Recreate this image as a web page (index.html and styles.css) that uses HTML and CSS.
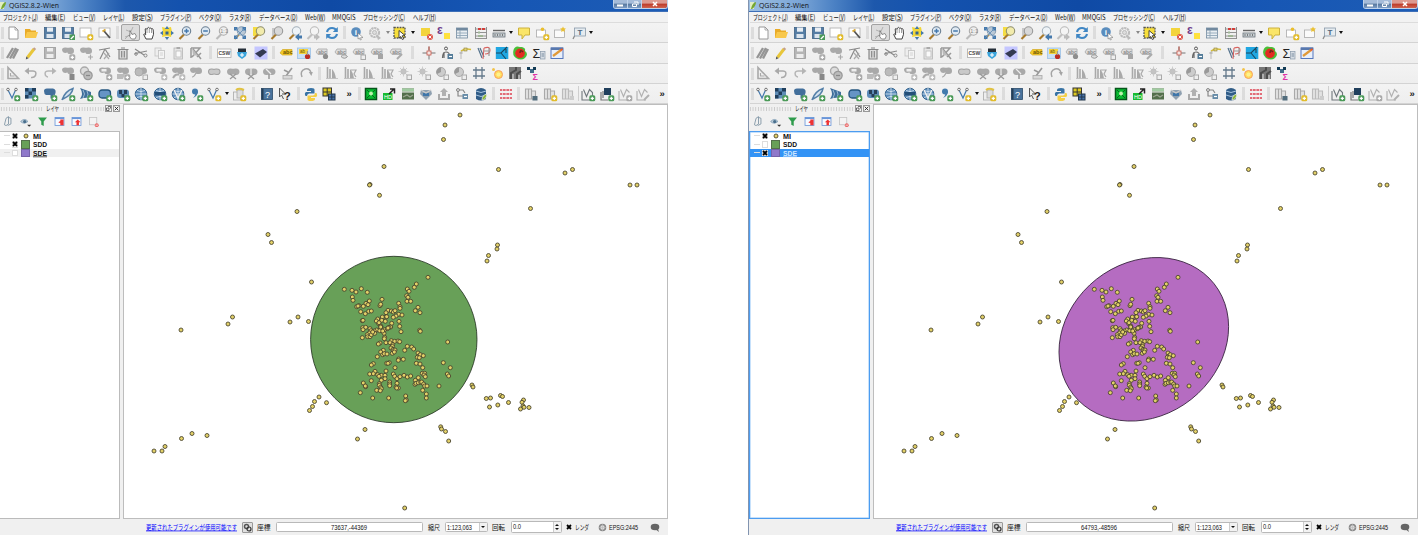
FILE: index.html
```html
<!DOCTYPE html>
<html lang="ja">
<head>
<meta charset="utf-8">
<title>QGIS2.8.2-Wien</title>
<link rel="stylesheet" href="styles.css">
</head>
<body>
<main class="desktop">
  <section class="window" id="left"></section>
  <section class="window window-right" id="right"></section>
</main>
<script src="app.js"></script>
</body>
</html>
```
FILE: styles.css
```css
* { box-sizing: border-box; }
body { margin: 0; background: #fff; overflow: hidden; font-family: "Noto Sans", "Noto Sans CJK JP", sans-serif; color: #111; }
svg { display: block; flex: none; overflow: visible; }
.desktop { display: flex; gap: 80px; width: 1418px; height: 535px; }
.window { width: 668px; height: 535px; flex: none; display: flex; flex-direction: column; background: #f0f0f0; overflow: hidden; }
.window-right { width: 670px; border-left: 1px solid #8294b0; padding-left: 1px; }

.label { font-family: "Noto Sans CJK JP", "Noto Sans", sans-serif; fill: #111; }
.label.latin { font-family: "Open Sans", "Noto Sans", sans-serif; }
.label.bold { font-family: "Liberation Sans", sans-serif; font-weight: bold; }
.label.narrow { font-family: "Liberation Sans", sans-serif; }
.label.link { fill: #00f; text-decoration: underline; }
.label.underlined { text-decoration: underline; }

.titlebar { height: 12px; flex: none; display: flex; align-items: flex-start; background: linear-gradient(90deg, #9dbfe2 0, #7ba6d7 50px, #4b81c4 85px, #1d58ac 125px, #1452ae 180px, #0f4aa5 330px, #1656b4 500px, #1d5cb5 100%); border-bottom: 1px solid #3d6fb8; }
.window-right .titlebar { margin-left: -1px; padding-left: 1px; }
.titlebar .logo { margin-left: -1px; }
.titlebar .caption { margin-left: 2px; }
.captions { margin-left: auto; display: flex; height: 9px; border: 1px solid #c0d2ea; border-top: 0; border-radius: 0 0 3px 3px; overflow: hidden; }
.cap { width: 14px; display: flex; justify-content: center; background: linear-gradient(#a5bbd9 0 40%, #58789f 50%, #7e9cc4); border-right: 1px solid #c0d2ea; }
.cap.close { width: 25px; background: linear-gradient(#dd9a90 0 40%, #bd3b2a 50%, #cf6450); border: 0; }

.menubar { height: 11px; flex: none; display: flex; gap: 7.4px; padding: 0 3px; background: #f2f2f2; border-bottom: 1px solid #dcdcdc; }
.toolbar { height: 20.3px; flex: none; display: flex; align-items: center; background: linear-gradient(#f3f3f3, #eee); border-bottom: 1px solid #d3d3d3; padding-left: 4px; position: relative; }
.toolbar::before { content: ""; position: absolute; left: 1px; top: 4px; width: 3px; height: 12px; background: radial-gradient(circle, #c4c4c4 .6px, transparent .8px) 0 0 / 2px 2px; }
.tool { width: 18.3px; flex: none; display: flex; justify-content: center; align-items: center; }
.tool.pressed { height: 17px; background: #dcdcdc; border: 1px solid #a2a2a2; border-radius: 2px; }
.sep { flex: none; display: flex; justify-content: center; }
.grip { width: 3px; height: 13px; background: radial-gradient(circle, #c4c4c4 .6px, transparent .8px) 0 0 / 2px 2px; }
.line { width: 1px; height: 15px; background: #cfcfcf; }
.arrow { width: 6.5px; flex: none; display: flex; justify-content: center; }
.arrow i { border: 2.5px solid transparent; border-top: 3px solid #111; border-bottom: 0; }
.arrow.dim i { border-top-color: #888; }

.workspace { flex: 1; min-height: 0; display: flex; }
.dock { width: 120px; flex: none; display: flex; flex-direction: column; margin-right: 3px; }
.window-right .dock { width: 121px; margin-left: -1px; }
.dock-title { height: 9px; flex: none; display: flex; align-items: center; gap: 3px; }
.dock-title .dots { flex: 1; height: 4px; background: radial-gradient(circle, #cacaca .6px, transparent .8px) 0 0 / 2.7px 2px; }
.dock-title .box { width: 7px; height: 7px; border: 1px solid #999; display: flex; align-items: center; justify-content: center; background: #f6f6f6; margin-left: -2px; }
.dock-tools { height: 17.5px; flex: none; display: flex; align-items: center; gap: 1px; }
.window-right .dock-tools { padding-left: 1px; }
.dock-tools .tool { width: 16px; }
.tree { flex: 1; background: #fff; border: 1px solid #bbb; border-left: 0; }
.window-right .tree { border: 1px solid #4c9cf0; box-shadow: inset 0 0 0 .5px #8fc3f8; }
.row { height: 8.5px; display: flex; align-items: center; padding-left: 4px; }
.row .branch { width: 6px; height: 1px; background: #ddd; margin-right: 1.5px; }
.row .check { width: 6.5px; height: 6.5px; border: 1px solid #ddd; background: #fff; display: flex; align-items: center; justify-content: center; }
.row .mark { width: 9px; height: 8.5px; margin: 0 3px; display: flex; align-items: center; justify-content: center; }
.row .swatch { width: 9px; height: 8.5px; border: 1px solid #54704c; }
.green { background: #68a058; }
.row .swatch.violet { background: #8f78ca; border-color: #7562a8; }
.row.hover { background: #f0f0f0; }
.row.selected { background: #3393f5; }
.row.selected .label { fill: #cfe6ff; }

.map { flex: 1; background: #fff; border: 1px solid #bdbdbd; overflow: hidden; min-width: 0; }
.dot { fill: #e2d068; stroke: #45402a; stroke-width: .85; }

.status { height: 16px; flex: none; display: flex; align-items: center; padding-left: 146px; }
.icon-button { width: 11px; height: 11px; border: 1px solid #999; border-radius: 1px; background: #e0e0e0; margin: 0 4px 0 5px; display: flex; justify-content: center; align-items: center; }
.field { height: 10px; border: 1px solid #b9b9b9; border-radius: 1.5px; background: #fff; display: flex; align-items: center; justify-content: center; }
.coord { width: 147px; margin: 0 5px; }
.combo { width: 43px; margin: 0 4px 0 5px; justify-content: space-between; padding-left: 1px; }
.spin { width: 51px; height: 12px; margin: 0 4px 0 6px; justify-content: space-between; padding-left: 1px; }
.combo .end, .spin .end { width: 8px; align-self: stretch; border-left: 1px solid #ccc; display: flex; flex-direction: column; justify-content: space-evenly; align-items: center; background: #f2f2f2; }
.down { border: 2px solid transparent; border-top: 2.5px solid #111; border-bottom: 0; }
.up { border: 2px solid transparent; border-bottom: 2.5px solid #111; border-top: 0; }
.render { margin-left: 3px; }
.crs { margin: 0 2px 0 9px; }
.bubble { margin-left: 12px; }
```
FILE: app.js
```js
// ---- small SVG helpers -------------------------------------------------
const G = '#a9a9a9', B = '#4479ad', D = '#203f5c', Y = '#f3d43c';
const p = (d, s = G, w = 1.2, f = 'none') => `<path d="${d}" stroke="${s}" stroke-width="${w}" fill="${f}"/>`;
const f = (d, c = G) => `<path d="${d}" fill="${c}"/>`;
const r = (x, y, w, h, c, s = 'none', sw = .8) => `<rect x="${x}" y="${y}" width="${w}" height="${h}" fill="${c}" stroke="${s}" stroke-width="${sw}"/>`;
const c = (x, y, q, col, s = 'none', w = 1) => `<circle cx="${x}" cy="${y}" r="${q}" fill="${col}" stroke="${s}" stroke-width="${w}"/>`;
const t = (x, y, z, col, s, extra = '') => `<text x="${x}" y="${y}" font-size="${z}" fill="${col}" font-family="Liberation Sans" ${extra}>${s}</text>`;
const plus = col => `<rect x="9.3" y="9.3" width="6" height="6" rx="1.6" fill="${col}"/>` + p('M12.3 10.7v3.2M10.7 12.3h3.2', '#fff', 1.2);
const gp = plus('#4b9a58'), yp = plus('#e2bc2c'), xp = plus('#aaa'), sq = r(10, 10, 4.5, 4.5, '#eee', G, 1);
const bean = (col = G) => f('M2 5Q2 2 6 2.5Q8 3.2 10 2.5Q14 2 14 6Q14 9 11 9H9.5Q7.5 9 7.5 7.5Q3 9 2 5Z', col);
const bean2 = f('M2 7Q2 3 6 3.5Q8 4.2 10 3.5Q14.5 3 14.5 7Q14 10.5 10.5 10Q8 9 6 10Q2.5 10.5 2 7Z', G);
const beanRing = p('M2.5 7Q2.5 3.500 6 4Q8 4.700 10 4Q14 3.500 14 7Q13.500 10 10.500 9.500Q8 8.500 6 9.500Q3 10 2.500 7Z', '#a2a2a2', 1.1, '#c9c9c9');
const doc = (s = '#aaa') => `<path d="M4 2h6l3 3v9H4z" fill="#fff" stroke="${s}"/>` + p('M10 2v3h3', s, .8);
const glass = (h = '#a87a2c', col = '#dfe9f2', s = '#6b7f92') => p('M2.5 14L7 9.5', h, 2.2) + c(9.5, 6, 4.2, col, s, 1.1);
const globe = c(8, 8, 5.8, '#5b8cba', '#37658f', 1) + p('M2.5 8h11M8 2v12M4 4.5q4 2.2 8 0M4 11.5q4-2.2 8 0', '#dce9f4', .8);
const tag = `<path d="M2 7L4 4H13V9.500H4Z" fill="#dedede" stroke="#b4b4b4"/>` + t(4.3, 8.5, 4.8, '#888', 'abc', 'font-weight="bold"');
const layers = (col = G) => p('M2.5 3h3v10h-3zM5.5 3h3v10h-3zM8.5 5h4v8h-4z', col, 1.1, '#e2e2e2');
const bars = p('M3.5 2v11.5M6 4v9.5', G, 1.6) + f('M8 4q3 3 4 9.5H8z') + p('M2 13.500h12', '#bbb', .8);
const pen = 'font-weight="bold"';

const icons = {
  new: doc('#999'),
  open: f('M2 4h5l1 1.5h5V13H2z', '#e9ab28') + f('M4 7h11l-2 6H2z', '#f8c84c'),
  save: r(2.5, 2.5, 11, 11, '#557da4', '#3e6284') + r(5, 2.5, 6, 4.2, '#e9eef3') + r(4.5, 9, 7, 4, '#dce5ee'),
  saveas: r(2.5, 2.5, 11, 11, '#557da4', '#3e6284') + r(5, 2.5, 6, 4.2, '#e9eef3') + r(4.5, 9, 7, 4, '#dce5ee') + r(9.5, 9.5, 5.5, 5.5, '#4b9a58') + p('M10.800 14l3-3', '#fff', 1.2),
  newprint: r(2, 3, 11, 9, '#fff', '#aaa') + yp,
  composer: r(2, 3, 11, 9, '#fff', '#aaa') + p('M7 6l6 7', '#555', 1.8) + p('M5.5 6.5l3-2', '#d5a83b', 2),
  touch: p('M3 14q5-3 8-12M4 5l5 2M3 12l8-3', '#aaa', .9) + `<path d="M8 5.500l2 4 3-1 1.300 2.500-1.300 3h-3.500l-2.500-3.500 1 .2z" fill="#fff" stroke="#777" stroke-width=".8"/>`,
  hand: `<path d="M5 14L2.7 9.5q0-1.5 2 .3L4.2 4q1-1.2 1.6.3L6.5 3q1-1.3 1.6 0l.8.3q1-1 1.5.5 1.300-.8 1.800 1l.3 4.500L11 14z" fill="#fff" stroke="#444" stroke-width="1"/>` + p('M6 4v4M8.3 3.5V8M10.5 4v4', '#777', .7),
  pansel: f('M3 2l4 1 5-1 1 5-1 5-4-1-5 1 1-5z', '#f0d63a') + f('M8 1l2.200 3H5.800zM8 15l2.200-3H5.800zM1 8l3-2.200v4.400zM15 8l-3-2.200v4.400z', B) + r(6.500, 6.500, 3, 3, '#33648f'),
  zoomin: glass() + p('M9.500 3.700v4.600M7.200 6h4.600', B, 1.5),
  zoomout: glass() + p('M7.200 6h4.600', B, 1.5),
  zoomnative: glass('#bbb', '#eee', '#aaa') + t(6.300, 8, 5.500, '#888', '1:1'),
  full: glass('#b09050', '#b9c8d6', '#8ca0b4') + f('M2 2h3.500v3.500H2zM10.500 2H14v3.500h-3.500zM2 10.500h3.500V14H2zM10.500 10.500H14V14h-3.500z', B) + p('M3.500 3.500l9 9M12.500 3.500l-9 9', '#6c94bb', 1),
  zoomsel: r(2, 2, 8, 9, '#f5dd43') + glass('#a87a2c', '#f2ebac', '#8f8f70'),
  zoomlayer: r(3, 3, 8, 8, '#c8c8c8') + glass('#a87a2c', '#d8d8d8', '#999'),
  zoomlast: glass('#a87a2c', '#eef3f7', '#a5b1bb') + f('M8 12l4-3.500v2H15v3h-3v2z', B),
  zoomnext: glass('#c0c0c0', '#f4f4f4', '#b9b9b9') + f('M15 12l-4-3.500v2H9v3h2v2z', '#bbb'),
  refresh: p('M3 7Q4 3 8 3q3 0 4.500 2.500M13 9q-1 4-5 4-3 0-4.500-2.500', '#3f86c4', 2.200) + f('M13.800 2v5h-5zM2.200 14V9h5z', '#3f86c4'),
  identify: c(7, 7, 4.800, '#5a8dbe') + t(5.800, 10, 8, '#fff', 'i', pen) + `<path d="M9 8l5 4.500-2.500.2.800 2-1 .3-.8-2L9 14z" fill="#fff" stroke="#777" stroke-width=".6"/>`,
  action: `<circle cx="7.500" cy="7.500" r="4.500" fill="none" stroke="#bcbcbc" stroke-width="2.200" stroke-dasharray="2.300 .6"/>` + c(7.500, 7.500, 2, '#ddd', '#bbb') + f('M9 9l5 4-3 2z', '#bbb'),
  select: `<rect x="2" y="2.500" width="11" height="10.500" fill="#f7df3b" stroke="#555" stroke-width="1.300" stroke-dasharray="1.800 1"/>` + `<path d="M7 5.500l6 5-2.800.3 1.600 3-1.500.7-1.500-3L7 13z" fill="#fff" stroke="#333" stroke-width=".9"/>`,
  deselect: r(3, 3, 9, 8, Y) + c(12, 12, 3, '#df5549') + p('M10.600 10.600l2.800 2.800M13.400 10.600l-2.800 2.800', '#fff', 1),
  expr: t(1, 9, 12, '#713e8c', 'ε', pen) + r(8, 8, 6, 6, '#ffe13d'),
  table: r(2.500, 3, 11, 10, '#e9eef2', '#71899f') + r(2.500, 3, 11, 2.500, '#71899f') + p('M2.500 8h11M2.500 10.500h11M6 5v8', '#91a6b8', .9),
  abacus: p('M2.500 2v12M13.500 2v12M2.500 4h11M2.500 7.500h11M2.500 11h11M2 13.500h12', '#888', .9) + p('M5 4h3M9 4h3', '#d23e39', 2.200) + p('M5 11h5M5 7.500h2', '#9fb595', 2),
  ruler: r(2, 8, 12, 4, '#c9d0d4', '#6b747a') + p('M2 5.500h12', '#666', 1.400) + p('M4 9v2M6.500 9v2M9 9v2M11.500 9v2', '#666', .8),
  tip: `<path d="M2.500 3h11v7H9l-3 4v-4H2.500z" fill="#fae568" stroke="#ccb13c"/>`,
  bookmark: r(2.500, 5, 9, 7, '#fff', '#aaa') + c(8.500, 4.300, 1.800, '#eabe2d') + yp,
  bookshow: r(2.500, 5, 10, 7.500, '#fafafa', '#aaa') + f('M11 1.500l.9 1.800 2 .3-1.400 1.400.3 2-1.800-1-1.800 1 .3-2L8.100 3.600l2-.3z', '#ebc133'),
  textann: r(3.500, 3, 11, 8, '#e5ebf0', '#8b9baa') + p('M3.500 11L2 14', '#888') + t(6.500, 10, 8, '#50657a', 'T', pen),

  pencils: p('M2 13L8 3M5 13.500L11 3M8 13.500L13 4', '#959595', 2.300),
  pencil: p('M4.500 12.500L11 4', '#e8c63a', 3) + p('M10.500 3l2 1.700', '#c4a08a', 2) + f('M2.800 14.500l.5-3 2.200 1.700z', '#555'),
  saveg: r(2.500, 2.500, 11, 11, '#b5b5b5', '#999') + r(5, 3, 6, 3.500, '#eee') + r(4.500, 9, 7, 4, '#ededed'),
  addf: bean() + xp, movef: bean() + p('M10 12h5M12.500 9.500v5', G),
  node: p('M2 5l11-2M3 14L8 4M8 4l5 8', '#8a8a8a') + p('M7 8l5 6M12 8l-5 6', '#aaa'),
  trash: p('M4 5v9h8V5M2.500 4.500h11M6 3h4M6.700 6v6.500M9.300 6v6.500', '#888', 1.200, '#ddd'),
  cut: p('M2 4l9 6M2 8.500L14 6', '#888') + c(12.500, 10.500, 1.500, 'none', '#888') + c(3, 9, 1.300, 'none', '#888'),
  copy: r(3, 3, 6, 8, '#eee', '#c3c3c3') + r(6.500, 5.500, 6, 8, '#f4f4f4', '#c0c0c0') + p('M8 8h3M8 10h3', '#ccc', .8),
  paste: r(4, 3, 8.500, 11, '#e6e6e6', '#b5b5b5') + r(6, 6, 5, 6, '#fafafa', '#bbb') + r(6.500, 2, 3.500, 2, '#aaa'),
  nosel: p('M3 3v10M3 3h9L4 12M5 4l8 10M13 8l-4 4', '#999', 1.500) + f('M4 3l6 8-5-1z', '#bbb'),
  csw: r(1.500, 4, 13.500, 8.500, '#fff', '#aaa') + t(2.500, 10.300, 5, '#444', 'CSW', pen),
  gps: r(4, 3.500, 8, 4, '#252f39') + f('M3 7h10l-1 4-4 3-4-3z', '#3ba4db') + p('M8 8v4M6 10h4', '#fff', 1.100),
  sat: r(1.500, 1.500, 13, 13, '#c4c6ff') + `<path d="M2 8.500l8-4.500 4 3-7 5.500z" fill="#343a52"/>`,
  lab: `<path d="M2 8l2.500-3.500H14V10H4.500z" fill="#f3cb29" stroke="#d1a822" stroke-width=".7"/>` + t(5, 9.300, 5.500, '#6a5200', 'abc', pen),
  labpin: r(1.500, 3, 13, 10.500, '#c9dff5', '#9cc1e5') + r(3, 4, 9, 5, '#f5d23d') + t(4, 8.300, 4.500, '#6a5200', 'ab') + c(11.500, 11.500, 2.600, '#bd2d24') + p('M11.500 6v4', '#999'),
  lab1: tag + c(11.500, 11.500, 2.600, '#8d8d8d'), lab2: tag + p('M8 11.500q3-3.500 6.500 0-3 3.500-6.500 0', '#999', 1, '#ddd'),
  lab3: tag + sq, lab4: tag + r(9, 9, 5, 5, '#a5a5a5'), lab5: tag + p('M9 14l5-5', '#aaa', 2),
  cross: p('M8 1.500v13M1.500 8h13', '#777', 1) + r(6, 6, 4, 4, '#f5e4e1', '#c9584b') + p('M8 1.500V5', '#c9584b', 1),
  person: c(7, 3.500, 1.500, 'none', '#555') + p('M3.500 13q0-6 3.500-6t3.500 4M5 7v6', '#666') + r(8.500, 9, 5.500, 5, '#527b98') + p('M10 11.500h3', '#fff'),
  digit: p('M4 14V7l4-3', '#c5c5c5', 1.300) + p('M4 6q4-3 10-1.500', '#d6bd36', 1.500) + r(7, 3, 3, 3, '#e5d372', '#8b7f3e', .6) + r(2.500, 7, 3, 2, '#bbb'),
  vpath: p('M2 3l4 10M4 3l4 9', '#54728c') + p('M8 3l-1 11M8 3q6-2 6 2t-5 4', '#d86461', 1.100) + p('M8 6h5M13 3v8', '#999'),
  cyan: r(1.800, 2, 12.500, 12, '#20a7e2') + p('M2 8h5l6-6M7 8l5 6M12 4v4', '#18465c', 1.100),
  heat: f('M8 2Q3 0 1.500 5Q0 10 4 13Q9 16 13 13Q17 9 13 6Q14 3 10 2z', '#49bf38') + c(8, 8.300, 4.800, '#e32b21') + p('M8 8q0-4 3-1', '#672b1b', 1.500),
  sigma: t(1.500, 12.500, 12.500, '#222', 'Σ') + r(9.500, 6.500, 4.500, 7.500, '#d6dce3', '#8b9aaa', .7) + p('M10.500 9h2.500M10.500 11h2.500', '#7b8ea0', 1),
  map: r(2, 3, 12, 10.500, '#e8effb', '#5477bd', 1) + r(2, 2.500, 12, 2.500, '#5878ad') + p('M4 11l8-6', '#e09a3a', 2.300) + p('M11.500 5.500l2-1.500', '#ec5a26', 2),

  tri: p('M3 2.500V13.500H13.500z', G, 1.600) + p('M5.500 8v3h4', G),
  undo: p('M4 6h6q4 0 2.500 4.500Q11 13 8 12.500', G, 1.500) + f('M1.500 6L6 2.500v7z'),
  redo: p('M12 6H6Q2 6 3.500 10.500 5 12 6 12', '#b5b5b5', 1.500) + f('M14.500 6L10 2.500v7z', '#b5b5b5'),
  b1: bean() + r(9.500, 9, 5, 6, '#888'), rings: c(6.500, 6, 4, '#ddd', G, 1.400) + c(10, 10.500, 4.200, '#bbb', '#999', 1.200) + p('M8 10.500h4', '#888'),
  b2: bean() + f('M4.500 4h5v2.500h-5z', '#eee') + xp, b3: bean() + f('M2 9h8l-2 5H2z', '#bbb') + xp, b4: bean() + c(6, 7, 4, '#bbb', G) + sq,
  b5: bean() + f('M4.500 4h5v2.500h-5z', '#eee') + plus('#bbb'), b6: bean() + p('M3 13q3-5 6-3', G, 2) + plus('#bbb'), b7: bean() + p('M8 8q-2 4-4 4', G), b8: beanRing,
  cut1: bean2 + p('M5 9l6 5M11 9l-6 5', '#999', 1.300), cut2: bean2 + p('M8 4v6', '#eee') + p('M5 9l6 5M11 9l-6 5', '#999', 1.300), cut3: bean2 + p('M5 4l5 5', '#eee') + p('M8 9v5', '#999', 1.500),
  broom: p('M6 11L12 3M8 7l-4-2', '#999', 1.600) + r(3, 10.500, 9, 3.500, '#d9d9d9', '#a9a9a9'),
  rot: p('M4 12Q1.500 6 7 4q5-1 6 4', '#a4a4a4', 1.500) + f('M14.800 7h-4l2.500 4z', '#a4a4a4'),
  bars1: bars, bars2: bars + p('M9 5h5l-2 4 2 3', G), sun: c(6.500, 6.500, 3, '#c0c0c0') + p('M6.500 1.500v10M1.500 6.500h10M3 3l7 7M10 3l-7 7', '#c4c4c4', .8) + sq,
  pie: c(7, 7, 4.500, '#ccc', '#aaa') + f('M7 7V2.500A4.500 4.500 0 0 0 3 9z', '#999') + sq,
  grid: p('M5 2v12M11 2v12M2 5h12M2 11h12', '#64798b', 1.300), spot: c(9.500, 9.500, 4, '#ffdc5b', '#f9a15d', 1) + c(4.500, 4.500, 1.500, '#f2c34a') + c(9.500, 9.500, 2, '#fff08c'),
  raster: r(2, 2, 12, 12, '#777') + p('M4 14V8l5-3V2M10 14V9l4-3', '#4c4c4c', 2) + p('M6 14V9M12 14v-4', '#ccc', 1.300),
  rsigma: r(2, 2, 3, 3, '#123b55') + r(5, 4, 4, 4, '#426d8a') + r(8, 2, 3, 3, '#123b55') + t(7.500, 15, 9, '#df35a9', 'Σ', pen),

  vec: p('M3 4l4 8 4-9', B, 1.200) + c(3, 3.500, 1.300, '#fff', '#555', .8) + c(11, 3.500, 1.300, '#fff', '#555', .8) + gp,
  ras: r(2, 2, 11, 10.500, '#5e8db6') + f('M2 2h3.500v3.500H2zM9 2h4v3.500H9zM5.500 5.500H9V9H5.500zM2 9h3.500v3.500H2z', D) + gp,
  pg: f('M2 5Q2 2 6 2.500h5q4 1 2 6-1 2-2 0v4H8.500V9H4Q2 8 2 5z', '#426f9b') + gp,
  spatia: p('M2 14Q5 5 13 2.500 12 9 3 13', '#537fa8', 1.600, '#d4e2ee') + gp,
  mssql: f('M2 13Q6 8 2 2l11 4v6q-6-1-11 1z', '#3f6e9b') + p('M5 4q3 4 0 8M9 5q2 3 0 7', '#a5c2db', .9) + gp,
  db: `<rect x="2" y="4" width="11.500" height="8" rx="3" fill="#6594c5" stroke="#24557f" stroke-width="1.300"/>` + gp,
  ora: `<rect x="2" y="3.500" width="12" height="8.500" rx="3" fill="#5c8bb8"/>` + r(4, 4, 3, 4, '#263f59') + r(9, 4, 3, 4, '#263f59') + r(6.500, 8, 3, 3, '#263f59') + gp,
  wms: globe + gp, wcs: globe + r(2.500, 6, 11, 3.500, '#244f78') + gp, wfs: globe + p('M4 4l4 8 4-8', '#eee', 1.500) + gp,
  comma: c(7, 5.500, 3, '#417aad') + f('M10 5q0 5-5 7 3-3 2-5z', '#417aad') + gp,
  vecy: p('M3 4l4 8 4-9', B, 1.200) + c(3, 3.500, 1.300, '#fff', '#555', .8) + c(11, 3.500, 1.300, '#fff', '#555', .8) + yp,
  copyy: r(2.500, 6, 7, 8, '#eee', '#aaa') + r(6, 4, 6, 8, '#ddd', '#aaa') + p('M5 4q3-2.500 8 0', '#e0c244', 2) + yp,
  book: r(2.500, 2.500, 11, 11, '#49739c', '#2b4b6a') + r(2.500, 2.500, 2, 11, '#263f56') + t(6, 11.500, 9, '#fff', '?'),
  what: p('M2.500 2v9l2-2 2 4', '#555', 1) + p('M2.500 2l6 6H5', '#555', 1) + t(7, 13.500, 11, '#222', '?', pen),
  python: f('M4 4q0-2 4-2t3.500 2v3.500H6Q4 8 4 10H2.500Q1 7 3 6h5V5H4z', '#3873a4') + f('M12 13q0 2-4 2t-3.500-2V9.500H10Q12 9 12 7h1.500q1.500 3-.5 4H8v1h4z', '#f3cf47'),
  grids: r(2, 2, 8.500, 8, '#dcc921', '#333', 1) + p('M6.200 2v8M2 6h8.500', '#333', 1) + r(7.500, 8, 6.500, 6, '#4772ab', '#22364b', 1) + p('M10.800 8v6M7.500 11H14', '#22364b', 1),
  gchip: r(2.500, 2.500, 11, 11, '#08bc32', '#05551b', 1.500) + p('M4 4l8 8M12 4l-8 8', '#07621e', 1) + c(8, 7.500, 2, '#bdf3ad'),
  run: r(2, 7, 9.500, 7, '#16bb30') + t(3, 12.800, 5.500, '#fff', 'HD') + p('M8 8l5-5M9 3h4.500v4.500', '#222', 1.500),
  photo: r(2, 2.500, 12, 11, '#536f4b') + r(2, 2.500, 12, 3, '#a0cba0') + p('M2 6h12', '#fff', .9) + p('M3 11l4-2 3 2 3-2', '#9ba691', 1.300),
  shield: f('M3 4h10l1 4-6 6-6-6z', '#8fa0b0') + r(5, 7, 6, 3, '#3f76aa') + p('M3 4l5 3 5-3', '#ccc'),
  upload: f('M8 2l4 4h-2v4H6V6H4z', '#b0b0b0') + p('M3 8v5h10V8', '#aaa', 2),
  pipe: c(4, 4, 1.500, '#ddd', '#888') + p('M4 5v5h5M5 4h4l2 3', '#888') + r(8.500, 8, 5.500, 5, '#678ca8') + p('M10 10.500h3', '#fff'),
  dbman: f('M3 4q5-4 10 0v9q-5 3-10 0z', '#315d87') + p('M3 5q5 3 10 0M3 9q5 3 10 0', '#a8c5df', 1) + p('M9 14q0-5 5-6-1 6-5 6', '#eee', .7, '#8bb637'),
  red: p('M2 4h12M2 8h12M2 12h12', '#dd4050', 1.500) + p('M4.500 3v10M8 3v10M11.500 3v10', '#f2f2f2', .7),
  lay1: layers() + r(9.500, 10, 5, 4.500, '#526d7d'), lay2: layers() + yp, lay3: layers('#bbb') + r(10, 10, 4, 4, '#ccc'),
  g1: p('M2 5v9h9M3.500 3.500l3 7 3-7 3 3v5', '#70777d', 1.100) + gp, g2: r(5, 2, 7, 7, D) + p('M2 6v8h7M4 12V5', '#777') + gp,
  g3: p('M2 5v9h9M3.500 3.500l3 7 3-7 3 3', '#b0b0b0', 1.100) + xp, g4: p('M2 5v9h9M3.500 3.500l3 7 3-7 3 3', '#b0b0b0', 1.100) + p('M9 14l5-5', '#b0b0b0', 2),
  more: t(5.500, 11, 9.500, '#222', '»', pen),

  group: p('M3 12l2-8 3-2v9l-3 2zM7 13l4-2V4L8 3', '#8095a5', 1.100),
  eye: p('M2 8q5-5 9 0-5 4-9 0', '#7b9ab3', 1, '#c1d0dc') + c(7, 8, 2, '#496f8d') + f('M10 12h5l-2.500 2.500z', '#333'),
  filter: f('M2.500 3h11L9.500 8v5.500l-3-1.500V8z', '#2f9c4d'),
  expand: r(2.500, 3, 11, 10, '#f7faff', '#6995d8', 1) + r(2.500, 3, 11, 2, '#6995d8') + f('M9 5.500h4v7H9V10L6.500 9 9 7.500z', '#e33'),
  collapse: r(2.500, 3, 11, 10, '#f7faff', '#6995d8', 1) + r(2.500, 3, 11, 2, '#6995d8') + f('M8 12.500V9H6l3.500-3.500L13 9h-2v3.500z', '#e33'),
  remove: r(3, 3, 9, 9, '#f3f3f3', '#c3c3c3', 1) + c(12, 12.500, 2.400, '#ea6464') + p('M10.500 12.500h3', '#fff', .9)
};

const icon = (n, size = 16) => `<svg width="${size}" height="${size}" viewBox="0 0 16 16">${icons[n]}</svg>`;
const tool = n => `<div class="tool${n === 'touch' ? ' pressed' : ''}">${icon(n)}</div>`;
// Text set to an exact advance width, like the condensed UI face
const label = (s, w, size = 7.5, cls = '', h = 10, extra = '') =>
  `<svg width="${w}" height="${h}"><text class="label ${cls}" x="0" y="${h / 2 + size * .36}" font-size="${size}" textLength="${w}" lengthAdjust="spacingAndGlyphs">${s}</text>${extra}</svg>`;
// Menu title with its mnemonic letter underlined
const menu = ([s, key, w]) => key
  ? label(`${s}(${key})`, w, 7.3, '', 10, `<path d="M${w - 6} 8.900h4" stroke="#333" stroke-width=".7"/>`)
  : label(s, w, 7.3);

// Tokens: icon name, "|w" grip, "/w" line, "_w" space, "v" menu arrow, "d" disabled arrow
const toolbar = spec => '<div class="toolbar">' + spec.split(' ').map(k => {
  if (k === 'v') return '<div class="arrow"><i></i></div>';
  if (k === 'd') return '<div class="arrow dim"><i></i></div>';
  if (k[0] === '|') return `<div class="sep" style="width:${k.slice(1)}px"><div class="grip"></div></div>`;
  if (k[0] === '/') return `<div class="sep" style="width:${k.slice(1)}px"><div class="line"></div></div>`;
  if (k[0] === '_') return `<div class="sep" style="width:${k.slice(1)}px"></div>`;
  return tool(k);
}).join('') + '</div>';

const toolbars = [
  'new open save saveas newprint composer |7.5 touch hand pansel zoomin zoomout zoomnative full zoomsel zoomlayer zoomlast zoomnext refresh |7 identify action d select _1 v deselect expr table abacus ruler v tip bookmark bookshow textann v',
  'pencils pencil saveg addf movef node trash cut copy paste nosel |9.5 csw gps sat |7 lab labpin lab1 lab2 lab3 lab4 lab5 |15 cross person digit vpath cyan heat sigma map',
  'tri undo redo b1 rings b2 b3 b4 b5 b6 b7 b8 cut1 cut2 cut3 broom rot |8 bars1 bars2 bars1 bars2 sun sun pie pie grid spot raster rsigma',
  'vec ras pg spatia mssql db ora wms wcs wfs comma vecy v copyy |9.5 book what |7.5 python grids _1 more |4 gchip run photo shield upload pipe dbman |7 red |7 lay1 lay2 lay3 /2 g1 g2 g3 g4 _1 more'
];

const menus = [['プロジェクト', 'J', 35], ['編集', 'E', 20.5], ['ビュー', 'V', 22.5], ['レイヤ', 'L', 21.5], ['設定', 'S', 21], ['プラグイン', 'P', 31.5], ['ベクタ', 'O', 22.5], ['ラスタ', 'R', 22], ['データベース', 'D', 38.5], ['Web', 'W', 20.5], ['MMQGIS', '', 23.5], ['プロセッシング', 'C', 42], ['ヘルプ', 'H', 23]];

// ---- map content ----------------------------------------------------------
const outer = [460,115,445,125,443.5,139.5,384,166.5,370,184.5,369.5,185,379.5,195.3,297,211.5,268,234.5,271.5,242.5,311.5,282,290,322,298,317,308.5,321.5,232.5,317,228,324,181,330,498.5,169.5,565,173,572.5,169.5,630,185,637,185,530.5,208.5,497.5,245,497,249,488.5,255.5,487,261,472,385,473,387,486.3,398.5,490.5,398,489.5,407,497.8,405,500.5,395.5,502.5,396.5,508.5,402.5,523.5,400,522,402.3,523,406,524,407.3,520.5,409,529,407.5,365,429.5,357.5,439,440.7,426.8,441.5,429,445.5,431.5,448.7,441,319,397,314.5,401.5,312.5,406.5,309.5,410.5,326.5,402.7,207,435.5,192,433.5,181.5,438.5,165,446.5,162,451,154,451,404.7,508];
// Inner cluster, in thirds of a pixel from (330, 260)
const inner = [294,52,259,72,253,82,232,87,237,94,230,107,234,112,231,124,242,124,43,88,66,91,78,96,94,86,112,97,67,111,69,121,156,118,150,137,152,133,118,123,108,130,114,134,100,139,87,137,80,140,84,138,92,155,106,161,116,154,124,153,97,182,99,181,98,203,107,202,99,209,97,233,206,130,210,140,210,145,264,142,256,152,270,158,269,211,271,214,174,151,168,158,184,153,190,156,195,152,206,163,216,165,198,168,190,172,168,170,157,171,155,181,143,177,139,183,146,191,166,184,170,170,207,184,185,190,182,201,177,202,209,199,213,215,153,200,150,209,164,209,172,206,162,220,164,232,163,236,140,210,133,213,120,206,123,212,118,219,112,224,113,230,120,230,124,224,134,220,152,198,149,212,158,213,174,204,128,216,147,188,152,201,150,249,145,252,168,248,184,242,180,248,194,244,204,243,209,245,188,254,187,259,183,264,189,268,190,272,195,270,187,280,160,271,152,276,158,284,163,281,171,282,142,290,193,276,232,259,245,261,251,267,224,271,264,279,268,287,271,284,280,287,262,292,268,293,353,246,340,308,361,323,352,342,356,348,327,378,206,297,205,301,220,298,178,308,170,310,174,310,195,323,130,311,124,315,259,310,270,312,278,323,168,333,135,334,130,341,119,342,143,344,154,346,165,346,147,349,165,356,154,361,190,342,194,349,201,356,210,350,222,346,232,351,242,348,124,362,100,369,107,380,106,378,148,371,148,376,152,382,154,386,140,391,151,392,179,366,179,372,179,377,201,370,198,381,205,384,200,384,265,353,256,361,255,373,258,370,265,368,272,367,277,340,284,340,282,345,286,350,275,366,281,372,284,378,291,378,278,391,289,402,289,414,128,414,176,414,91,398,227,408,229,420,226,422];
let dots = '';
for (let i = 0; i < outer.length; i += 2) dots += `<circle class="dot" cx="${outer[i]}" cy="${outer[i + 1]}" r="2"/>`;
for (let i = 0; i < inner.length; i += 2) dots += `<circle class="dot" cx="${(inner[i] / 3 + 330).toFixed(1)}" cy="${(inner[i + 1] / 3 + 260).toFixed(1)}" r="2"/>`;

const cross = '<svg width="6" height="6" viewBox="0 0 6 6"><path d="M1 1l4 4M5 1L1 5" stroke="#000" stroke-width="1.8"/></svg>';
const row = (cls, on, mark, text) => `<div class="row ${cls}"><span class="branch"></span><span class="check">${on ? cross : ''}</span><span class="mark">${mark}</span>${text}</div>`;

function render(id, o) {
  document.getElementById(id).innerHTML = `
<header class="titlebar">
  <svg class="logo" width="8" height="11" viewBox="0 0 8 11"><path d="M1 2h4v7H1z" fill="#e3efc2"/><path d="M2 9Q3 3 7 2Q7 6 3 9z" fill="#76a72e"/></svg>
  <div class="caption">${label('QGIS2.8.2-Wien', 50, 7.6, 'latin', 11)}</div>
  <div class="captions"><div class="cap"><svg width="9" height="8"><path d="M1 5.5h6" stroke="#fff" stroke-width="1.8"/></svg></div><div class="cap"><svg width="8" height="8"><path d="M3 2h4v3M1.5 4h4v2.5h-4z" fill="none" stroke="#fff" stroke-width="1"/></svg></div><div class="cap close"><svg width="8" height="8"><path d="M2 2l4 4M6 2L2 6" stroke="#fff" stroke-width="1.5"/></svg></div></div>
</header>
<nav class="menubar">${menus.map(menu).join('')}</nav>
${toolbars.map(toolbar).join('')}
<div class="workspace">
  <aside class="dock">
    <div class="dock-title"><span class="dots"></span>${label('レイヤ', 13, 7, '', 9)}<span class="dots"></span><span class="box"><svg width="5" height="5"><path d="M2 .5h2.500v2M.5 2h2.500v2.500H.5z" fill="none" stroke="#333" stroke-width=".7"/></svg></span><span class="box"><svg width="5" height="5"><path d="M.7.7l3.600 3.600M4.300.7L.7 4.300" stroke="#222" stroke-width=".9"/></svg></span></div>
    <div class="dock-tools">${['group', 'eye', 'filter', 'expand', 'collapse', 'remove'].map(n => `<div class="tool">${icon(n, 13)}</div>`).join('')}</div>
    <div class="tree">
      ${row('', true, '<svg width="6" height="6"><circle class="dot" cx="3" cy="3" r="2"/></svg>', label('MI', 8, 7, 'bold', 8))}
      ${row('', o.sdd, '<span class="swatch green"></span>', label('SDD', 14, 7, 'bold', 8))}
      ${row(o.sde ? 'selected' : 'hover', o.sde, '<span class="swatch violet"></span>', label('SDE', 14, 7, 'bold underlined', 8))}
    </div>
  </aside>
  <div class="map"><svg width="543" height="413" viewBox="124 105 543 413">${o.shape}${dots}</svg></div>
</div>
<footer class="status">
  ${label('更新されたプラグインが使用可能です', 91, 7.2, 'link')}
  <span class="icon-button"><svg width="9" height="9"><circle cx="3.5" cy="3.5" r="2" fill="none" stroke="#555" stroke-width="1.5"/><circle cx="6" cy="6" r="2" fill="none" stroke="#333" stroke-width="1.2"/></svg></span>
  ${label('座標', 13.5, 7)}
  <span class="field coord">${label(o.coord, 36, 7, 'narrow', 8)}</span>
  ${label('縮尺', 12, 7)}
  <span class="field combo">${label('1:123,063', 25, 7, 'narrow', 8)}<span class="end"><i class="down"></i></span></span>
  ${label('回転', 13, 7)}
  <span class="field spin">${label('0.0', 8, 6.5, 'narrow', 8)}<span class="end"><i class="up"></i><i class="down"></i></span></span>
  ${cross}<span class="render">${label('レンダ', 14, 7)}</span>
  <svg class="crs" width="9" height="9"><circle cx="4.5" cy="4.5" r="3" fill="#ddd" stroke="#888" stroke-width="1.6"/><path d="M1 4.5h7M4.5 1v7" stroke="#bbb" stroke-width=".6"/></svg>
  ${label('EPSG:2445', 29, 7, 'narrow')}
  <svg class="bubble" width="10" height="9"><ellipse cx="5" cy="4" rx="4.300" ry="3.300" fill="#666"/><path d="M5 6h3l1 3z" fill="#666"/></svg>
</footer>`;
}

render('left', { sdd: true, sde: false, coord: '73637,-44369', shape: '<circle cx="393.8" cy="339.5" r="83.2" fill="#68a058" stroke="#1d2b1a" stroke-width=".8"/>' });
render('right', { sdd: false, sde: true, coord: '64793,-48596', shape: '<ellipse cx="393.8" cy="339.3" rx="89.6" ry="76.5" transform="rotate(-38.3 393.8 339.3)" fill="#b56cc1" stroke="#33203a" stroke-width=".8"/>' });
```
